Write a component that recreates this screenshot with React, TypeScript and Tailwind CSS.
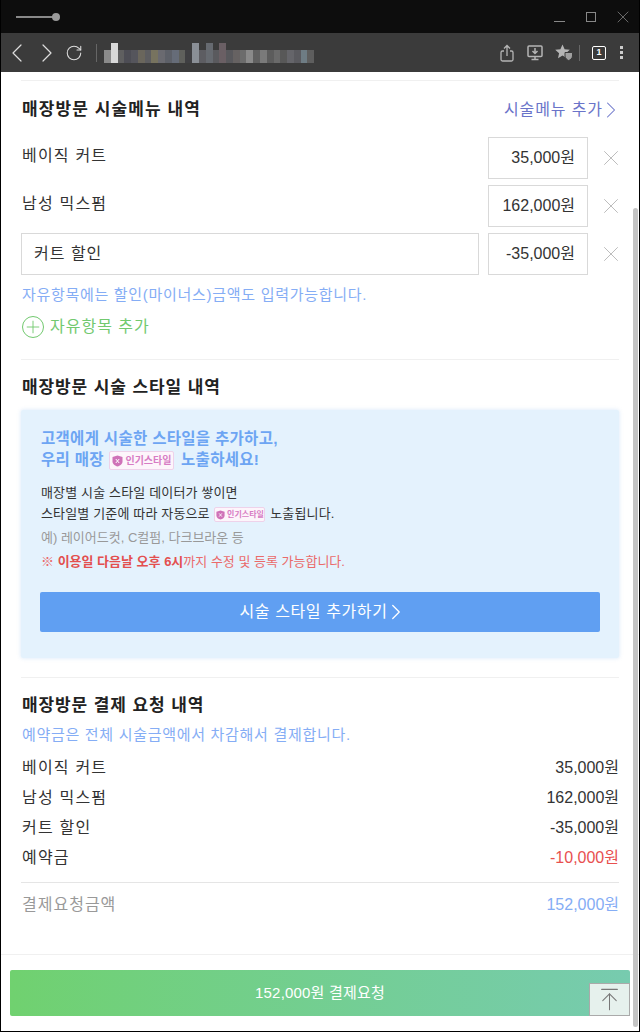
import { ChevronLeft, ChevronRight, RotateCw, X, Plus, ArrowUpToLine } from "lucide-react";

const FONT = "font-['Liberation_Sans','Noto_Sans_CJK_KR',sans-serif]";

// pixelated address bar
const BLUR: [string, boolean?][] = [
  ["#8a8a8a"], ["#d8d8d8", true], ["#5f5f60"], ["#4d4d55"], ["#55555c"], ["#6a665c"], ["#5d5d60"], ["#77735f"], ["#6a6a70"], ["#5d6068"],
  ["#666c78"], ["#5f605c"], ["#3f3f42"], ["#8a8f96", true], ["#5d5d62"], ["#666a70", true], ["#5a5a5e"], ["#6a5f64", true], ["#58585c"], ["#666262"],
  ["#6c6c6c"], ["#8a8a8a"], ["#606060"], ["#7a7a7a"], ["#5c5c5c"], ["#6a6a6a"], ["#585858"], ["#65656a"], ["#5a5a5f"], ["#6e7c84"], ["#5e5e5e"],
];

function PopularBadge({ small }: { small?: boolean }) {
  return (
    <span className={`inline-flex items-center justify-center gap-[2px] align-middle rounded-[2px] border border-[#eed2ea] bg-[#fdf5fb] font-bold tracking-normal text-[#d77cc4] ${small ? "w-[51px] h-[15px] text-[8px] mx-[1px]" : "w-[65px] h-[19px] text-[10px] ml-[1px] mr-[2px]"}`}>
      <svg width={small ? 9 : 11} height={small ? 10 : 12} viewBox="0 0 11 12">
        <path d="M5.5 0.5L10.5 2V6.5C10.5 9 8 11 5.5 11.5C3 11 0.5 9 0.5 6.5V2Z" fill="#cf72b8" />
        <path d="M3.8 4L7.2 8M7.2 4L3.8 8" stroke="#fff" strokeWidth="1" />
      </svg>
      인기스타일
    </span>
  );
}

function PriceBox({ price }: { price: string }) {
  return (
    <>
      <div className="w-[100px] h-[42px] border border-[#d9d9d9] flex items-center justify-end pr-[12px] text-[16px] text-[#333] shrink-0">{price}</div>
      <X size={26} strokeWidth={0.9} className="text-[#bbb] ml-[10px] -mr-[5px] shrink-0" />
    </>
  );
}

function MenuRow({ label, price }: { label: string; price: string }) {
  return (
    <div className="flex items-center h-[42px]">
      <div className="w-[466px] ml-[1px] shrink-0 text-[16px] tracking-[1.2px] text-[#333] -mt-[4px]">{label}</div>
      <PriceBox price={price} />
    </div>
  );
}

function PayRow({ label, value, valueClass = "text-[#333]" }: { label: string; value: string; valueClass?: string }) {
  return (
    <div className="flex items-center justify-between h-[30px] text-[16px] text-[#333]">
      <span className="tracking-[1.2px] ml-[1px]">{label}</span>
      <span className={valueClass}>{value}</span>
    </div>
  );
}

export default function App() {
  return (
    <div className={`relative w-[640px] h-[1032px] overflow-hidden bg-white border-x border-b border-black flex flex-col ${FONT}`}>
      {/* Browser chrome */}
      <div className="h-[33px] bg-[#0d0d0d] flex items-center justify-between pl-[15px] pr-[6px] shrink-0">
        <div className="flex items-center">
          <div className="w-[37px] h-[2px] bg-[#888]" />
          <div className="w-[8px] h-[8px] rounded-full bg-[#999] -ml-[1px]" />
        </div>
        <div className="flex items-center text-[#888]">
          <div className="w-[11px] h-[11px] flex items-end"><div className="w-full h-px bg-[#888]" /></div>
          <div className="w-[10px] h-[10px] border border-[#888] ml-[21px]" />
          <X size={20} strokeWidth={0.9} className="ml-[17px]" />
        </div>
      </div>
      <div className="h-[39px] bg-[#3b3b3b] flex items-center shrink-0 text-[#ddd]">
        <ChevronLeft size={32} strokeWidth={0.9} />
        <ChevronRight size={32} strokeWidth={0.9} className="-ml-[2px]" />
        <RotateCw size={18} strokeWidth={1.4} className="ml-[2px]" />
        <div className="w-px h-[18px] bg-[#666] ml-[13px]" />
        <div className="flex items-end ml-[7px] w-[210px] h-[20px] mt-[1px]">
          {BLUR.map(([c, tall], i) => (
            <div key={i} className={`flex-1 ${tall ? "h-[20px]" : "h-[13px]"}`} style={{ backgroundColor: c }} />
          ))}
        </div>
        <div className="flex-1" />
        <svg width="14" height="18" viewBox="0 0 14 18">
          <path d="M4 7H2.5A1.5 1.5 0 0 0 1 8.5V15.5A1.5 1.5 0 0 0 2.5 17H11.5A1.5 1.5 0 0 0 13 15.5V8.5A1.5 1.5 0 0 0 11.5 7H10M7 12V1.5M4 4.5L7 1.5L10 4.5" fill="none" stroke="#b5b5b5" strokeWidth="1.3" />
        </svg>
        <svg width="16" height="16" viewBox="0 0 16 16" className="ml-[13px]">
          <rect x="1" y="1" width="14" height="10.5" rx="1" fill="none" stroke="#b5b5b5" strokeWidth="1.5" />
          <path d="M8 3V8M5.5 6L8 8.5L10.5 6" fill="none" stroke="#b5b5b5" strokeWidth="1.5" />
          <path d="M4.5 14.5H11.5M8 12V14.5" stroke="#b5b5b5" strokeWidth="1.5" />
        </svg>
        <svg width="18" height="17" viewBox="0 0 18 17" className="ml-[12px]">
          <path d="M7.5 0.5L9.6 5.3L14.8 5.8L10.9 9.2L12 14.2L7.5 11.6L3 14.2L4.1 9.2L0.2 5.8L5.4 5.3Z" fill="#b5b5b5" />
          <path d="M10 8.5L17.5 8.5V12C17.5 14.5 15 16 13.7 16.5C12.5 16 10 14.5 10 12Z" fill="#a0a0a0" stroke="#3b3b3b" />
        </svg>
        <div className="w-px h-[16px] bg-[#666] ml-[6px]" />
        <div className="w-[14px] h-[14px] border border-white rounded-[2px] ml-[12px] flex items-center justify-center text-[9px] font-bold text-white">1</div>
        <div className="flex flex-col gap-[2px] ml-[14px] mr-[16px]">
          <div className="w-[3px] h-[3px] bg-[#ccc]" />
          <div className="w-[3px] h-[3px] bg-[#ccc]" />
          <div className="w-[3px] h-[3px] bg-[#ccc]" />
        </div>
      </div>

      {/* Page */}
      <div className="flex-1 flex flex-col min-h-0 px-[20px]">
        <div className="h-px bg-[#f0f0f0] mt-[8px]" />

        <div className="flex items-center justify-between mt-[17px] h-[24px]">
          <h2 className="text-[17px] font-bold tracking-[1.1px] text-[#222] ml-[1px]">매장방문 시술메뉴 내역</h2>
          <div className="flex items-center text-[16px] tracking-[0.9px] text-[#6a74c9]">
            시술메뉴 추가
            <ChevronRight size={28} strokeWidth={0.9} className="-ml-[6px] -mr-[6px]" />
          </div>
        </div>

        <div className="flex flex-col gap-[6px] mt-[15px]">
          <MenuRow label="베이직 커트" price="35,000원" />
          <MenuRow label="남성 믹스펌" price="162,000원" />
          <div className="flex items-center h-[42px]">
            <div className="w-[458px] h-[42px] border border-[#d9d9d9] flex items-center pl-[12px] text-[16px] tracking-[1px] text-[#333] mr-[9px] shrink-0">커트 할인</div>
            <PriceBox price="-35,000원" />
          </div>
        </div>

        <p className="text-[15px] tracking-[0.7px] text-[#85adf5] mt-[10px] leading-[20px] ml-[1px]">자유항목에는 할인(마이너스)금액도 입력가능합니다.</p>

        <div className="flex items-center mt-[11px] text-[16px] tracking-[1px] text-[#72c96f] h-[22px] ml-[1px]">
          <div className="w-[22px] h-[22px] rounded-full border-[1.5px] border-[#72c96f] flex items-center justify-center mr-[6px]">
            <Plus size={20} strokeWidth={1.1} />
          </div>
          자유항목 추가
        </div>

        <div className="h-px bg-[#f0f0f0] mt-[21px]" />

        <h2 className="text-[17px] font-bold tracking-[0.9px] text-[#222] mt-[17px] leading-[22px] ml-[1px]">매장방문 시술 스타일 내역</h2>

        <div className="mt-[11px] h-[248px] rounded-[2px] bg-[#e4f2fd] shadow-[0_0_4px_rgba(100,160,230,0.25)] px-[19px] pt-[18px] flex flex-col">
          <div className="text-[15.5px] font-bold tracking-[0.3px] text-[#6da5f3] leading-[21px] ml-[1px]">
            고객에게 시술한 스타일을 추가하고,
            <br />
            우리 매장 <PopularBadge /> 노출하세요!
          </div>
          <div className="mt-[12px] text-[13px] tracking-[0.15px] text-[#333] leading-[21px] ml-[1px]">
            매장별 시술 스타일 데이터가 쌓이면
            <br />
            스타일별 기준에 따라 자동으로 <PopularBadge small /> 노출됩니다.
          </div>
          <div className="mt-[3px] text-[13px] text-[#999] leading-[21px] ml-[1px]">예) 레이어드컷, C컬펌, 다크브라운 등</div>
          <div className="mt-[3px] text-[13px] text-[#ea6a6a] leading-[21px] ml-[1px]">
            ※ <b className="text-[#e34f4f]">이용일 다음날 오후 6시</b>까지 수정 및 등록 가능합니다.
          </div>
          <div className="mt-[20px] h-[40px] rounded-[2px] bg-[#609ff2] flex items-center justify-center text-[16px] tracking-[0.6px] text-white">
            시술 스타일 추가하기
            <ChevronRight size={26} strokeWidth={1.2} className="-ml-[4px] -mr-[9px]" />
          </div>
        </div>

        <div className="h-px bg-[#f0f0f0] mt-[19px]" />

        <h2 className="text-[17px] font-bold tracking-[0.9px] text-[#222] mt-[17px] leading-[22px] ml-[1px]">매장방문 결제 요청 내역</h2>
        <p className="text-[15px] tracking-[0.7px] text-[#85adf5] mt-[8px] leading-[20px] ml-[1px]">예약금은 전체 시술금액에서 차감해서 결제합니다.</p>

        <div className="mt-[8px] flex flex-col">
          <PayRow label="베이직 커트" value="35,000원" />
          <PayRow label="남성 믹스펌" value="162,000원" />
          <PayRow label="커트 할인" value="-35,000원" />
          <PayRow label="예약금" value="-10,000원" valueClass="text-[#e8504f]" />
        </div>

        <div className="h-px bg-[#e5e5e5] mt-[9px]" />
        <div className="flex items-center justify-between h-[30px] mt-[7px] text-[16px]">
          <span className="text-[#999] tracking-[1px] ml-[1px]">결제요청금액</span>
          <span className="text-[#85adf5]">152,000원</span>
        </div>
      </div>

      {/* Footer */}
      <div className="h-[77px] border-t border-[#f0f0f0] px-[9px] pt-[15px] shrink-0">
        <div className="h-[46px] rounded-[2px] bg-gradient-to-r from-[#70d16f] to-[#77cbaf] flex items-center justify-center text-[15px] tracking-[0.2px] text-white">
          152,000원 결제요청
        </div>
      </div>

      {/* Scrollbar + to-top overlay */}
      <div className="absolute right-[1px] top-[208px] bottom-[4px] w-[5px] bg-[#c4c4c4] rounded-full" />
      <div className="absolute left-[588px] top-[983px] w-[41px] h-[33px] bg-[#e6f1ed] border border-[#aaa] flex items-center justify-center text-[#777]">
        <ArrowUpToLine size={27} strokeWidth={0.9} />
      </div>
    </div>
  );
}
